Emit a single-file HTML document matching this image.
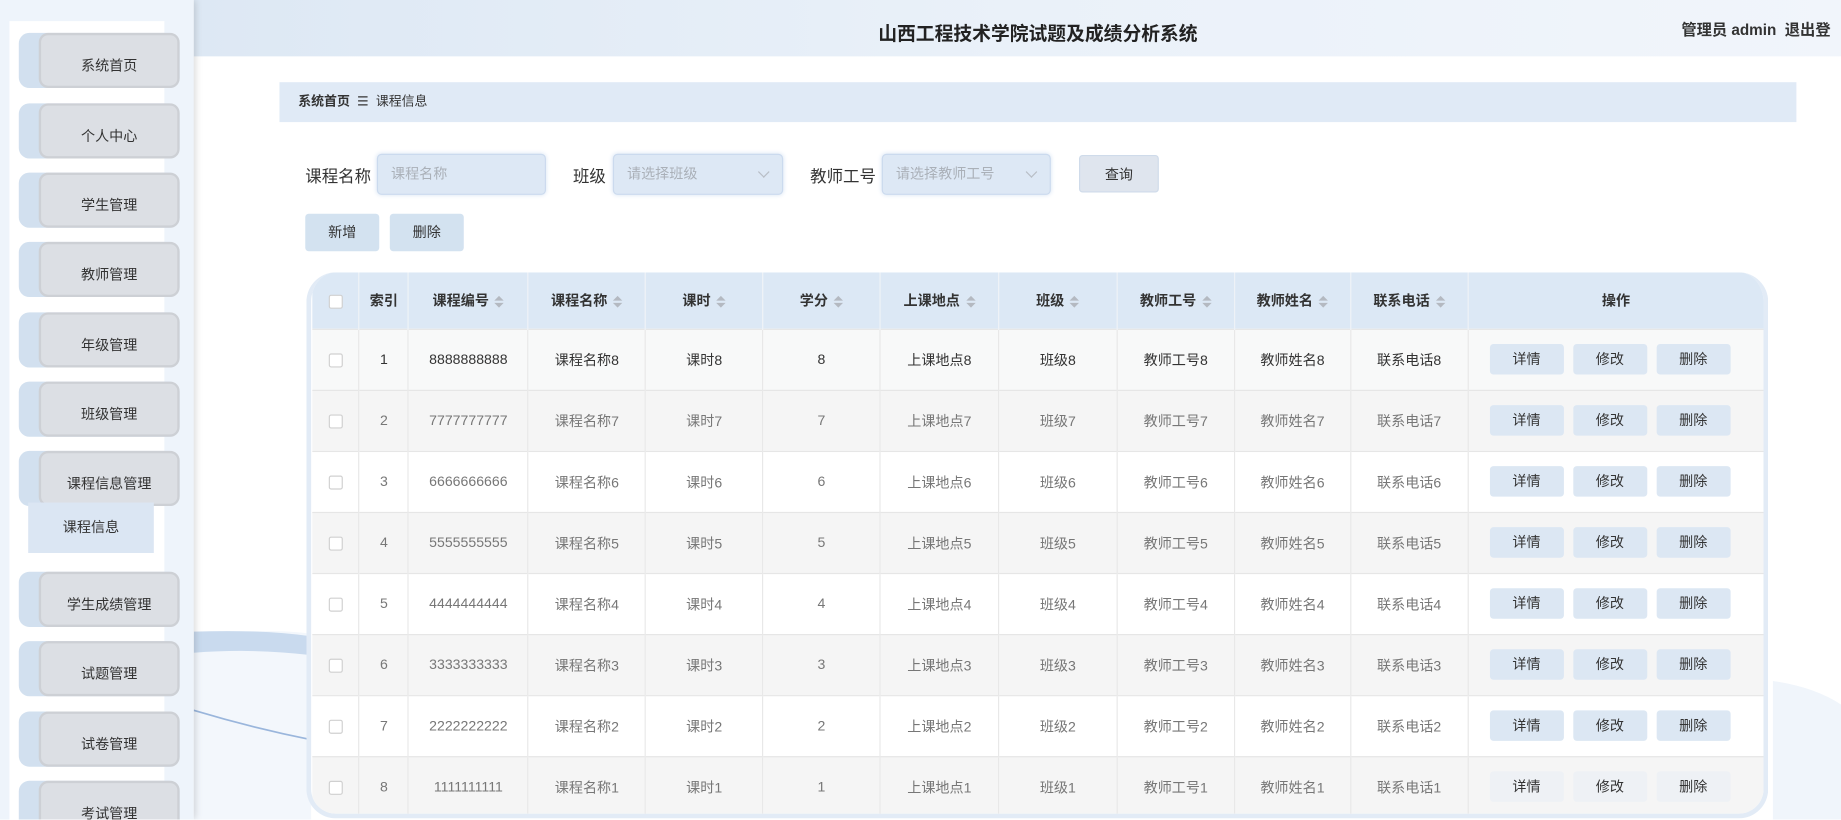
<!DOCTYPE html>
<html><head><meta charset="utf-8"><style>
*{margin:0;padding:0;box-sizing:border-box}
html,body{width:1841px;height:819px;overflow:hidden;background:#fff}
#w{position:absolute;left:0;top:0;width:1568px;height:698px;transform:scale(1.17411);transform-origin:0 0;font-family:"Liberation Sans","Noto Sans CJK SC",sans-serif;color:#333;background:#fff;overflow:hidden}
.abs{position:absolute}
#hdr{left:165px;top:0;width:1403px;height:48px;background:linear-gradient(90deg,#dde8f4,#eaf1f9 50%,#f1f5fb)}
#title{left:748px;top:15px;font-size:16px;font-weight:bold;color:#222;white-space:nowrap}
#user{left:1432px;top:15px;font-size:13px;font-weight:bold;color:#333;white-space:nowrap}
#side{left:0;top:0;width:165px;height:698px;background:#eef4fb;box-shadow:2px 0 6px rgba(0,0,0,.15)}
#sidein{left:8px;top:18px;width:132px;height:680px;background:#fff}
.mi{position:absolute;left:16px;width:137px;height:47px;background:#d2e0ef;border-radius:9px}
.mi div{position:absolute;left:17px;top:0;right:0;bottom:0;background:#dcdfe4;border:2px solid #cdd0d5;border-radius:8px;font-size:12px;text-align:center;padding-top:17px;color:#333}
#sub{left:24px;top:428px;width:107px;height:43px;background:#dbe6f3;font-size:12px;text-align:center;line-height:43px}
#bc{left:238px;top:70px;width:1292px;height:34px;background:#e0eaf6;font-size:11px;line-height:34px;padding-left:16px}
.lbl{font-size:14px;top:140px}
.inp{top:131px;height:35px;background:#dde8f5;border:1px solid #cbdaee;border-radius:4px;box-shadow:0 0 4px #d6e3f3;font-size:12px;color:#aab0b8;line-height:33px;padding-left:11px}
.chev{position:absolute;right:12px;top:11px;width:7px;height:7px;border-right:1px solid #b8bec6;border-bottom:1px solid #b8bec6;transform:rotate(45deg)}
.btn{height:32px;background:#d3e2f0;border-radius:3px;font-size:12px;text-align:center;line-height:32px}
#tbl{left:261px;top:232px;width:1245px;height:465px;border:4px solid #e2ebf6;border-top:0;border-radius:25px;overflow:hidden;background:#fff}
table{border-collapse:collapse;font-size:12px;position:absolute;left:1px;top:0}
th{height:48px;background:#dce8f5;font-weight:bold;color:#333;border-right:1px solid #eef2f7}
td{height:52px;text-align:center;color:#777;border-right:1px solid #e8e8e8;border-top:1px solid #e6e6e6}
tr.g td{background:#f5f5f5}
tr.f td{background:#f8f9f9;color:#333}
.cb{display:inline-block;width:12px;height:12px;border:1px solid #d0d0d0;background:#fff;border-radius:2px;vertical-align:middle}
.srt{display:inline-block;width:8px;height:11px;vertical-align:middle;margin-left:5px;position:relative}
.srt:before{content:"";position:absolute;left:0;top:0;border:4px solid transparent;border-bottom:4px solid #b4b9c1;border-top:0}
.srt:after{content:"";position:absolute;left:0;top:6px;border:4px solid transparent;border-top:4px solid #b4b9c1;border-bottom:0}
.ab{display:inline-block;width:63px;height:26px;line-height:26px;background:#dce7f3;border-radius:3px;color:#333;margin:0 4px;text-align:center}
td.op{text-align:left;padding-left:14px;border-right:0}
</style></head><body><div id="w">
<svg class="abs" style="left:165px;top:480px" width="1403" height="218"><path d="M0 60 Q150 50 100 80 L100 218 L0 218Z" fill="#f3f7fc"/><path d="M0 58 Q60 56 100 62 L100 78 Q50 72 0 76Z" fill="#c9daee"/><path d="M0 125 Q50 140 100 150" stroke="#9ab6dc" stroke-width="1.5" fill="none"/><path d="M1345 100 Q1380 105 1403 120 L1403 218 L1345 218Z" fill="#f0f5fb"/></svg>
<div id="hdr" class="abs"></div>
<div id="title" class="abs">山西工程技术学院试题及成绩分析系统</div>
<div id="user" class="abs">管理员 admin &nbsp;退出登</div>
<div id="side" class="abs"></div>
<div id="sidein" class="abs"></div>
<div class="mi" style="top:28px"><div>系统首页</div></div>
<div class="mi" style="top:88px"><div>个人中心</div></div>
<div class="mi" style="top:147px"><div>学生管理</div></div>
<div class="mi" style="top:206px"><div>教师管理</div></div>
<div class="mi" style="top:266px"><div>年级管理</div></div>
<div class="mi" style="top:325px"><div>班级管理</div></div>
<div class="mi" style="top:384px"><div>课程信息管理</div></div>
<div id="sub" class="abs">课程信息</div>
<div class="mi" style="top:487px"><div>学生成绩管理</div></div>
<div class="mi" style="top:546px"><div>试题管理</div></div>
<div class="mi" style="top:606px"><div>试卷管理</div></div>
<div class="mi" style="top:665px"><div>考试管理</div></div>
<div id="bc" class="abs"><b>系统首页</b> &nbsp;☰ &nbsp;课程信息</div>
<div class="abs lbl" style="left:260px">课程名称</div>
<div class="abs inp" style="left:321px;width:144px">课程名称</div>
<div class="abs lbl" style="left:488px">班级</div>
<div class="abs inp" style="left:522px;width:145px">请选择班级<span class="chev"></span></div>
<div class="abs lbl" style="left:690px">教师工号</div>
<div class="abs inp" style="left:751px;width:144px">请选择教师工号<span class="chev"></span></div>
<div class="abs btn" style="left:919px;top:132px;width:68px;background:#dfe5ee;border:1px solid #cfdbea">查询</div>
<div class="abs btn" style="left:260px;top:182px;width:63px">新增</div>
<div class="abs btn" style="left:332px;top:182px;width:63px">删除</div>
<div id="tbl" class="abs"><table>
<tr><th style="width:40px"><span class="cb"></span></th><th style="width:42px">索引</th><th style="width:102px">课程编号<span class="srt"></span></th><th style="width:100px">课程名称<span class="srt"></span></th><th style="width:100px">课时<span class="srt"></span></th><th style="width:100px">学分<span class="srt"></span></th><th style="width:101px">上课地点<span class="srt"></span></th><th style="width:101px">班级<span class="srt"></span></th><th style="width:100px">教师工号<span class="srt"></span></th><th style="width:99px">教师姓名<span class="srt"></span></th><th style="width:100px">联系电话<span class="srt"></span></th><th style="width:252px;border-right:0">操作</th></tr>
<tr class="f"><td><span class="cb"></span></td><td>1</td><td>8888888888</td><td>课程名称8</td><td>课时8</td><td>8</td><td>上课地点8</td><td>班级8</td><td>教师工号8</td><td>教师姓名8</td><td>联系电话8</td><td class="op"><span class="ab">详情</span><span class="ab">修改</span><span class="ab">删除</span></td></tr>
<tr class="g"><td><span class="cb"></span></td><td>2</td><td>7777777777</td><td>课程名称7</td><td>课时7</td><td>7</td><td>上课地点7</td><td>班级7</td><td>教师工号7</td><td>教师姓名7</td><td>联系电话7</td><td class="op"><span class="ab">详情</span><span class="ab">修改</span><span class="ab">删除</span></td></tr>
<tr><td><span class="cb"></span></td><td>3</td><td>6666666666</td><td>课程名称6</td><td>课时6</td><td>6</td><td>上课地点6</td><td>班级6</td><td>教师工号6</td><td>教师姓名6</td><td>联系电话6</td><td class="op"><span class="ab">详情</span><span class="ab">修改</span><span class="ab">删除</span></td></tr>
<tr class="g"><td><span class="cb"></span></td><td>4</td><td>5555555555</td><td>课程名称5</td><td>课时5</td><td>5</td><td>上课地点5</td><td>班级5</td><td>教师工号5</td><td>教师姓名5</td><td>联系电话5</td><td class="op"><span class="ab">详情</span><span class="ab">修改</span><span class="ab">删除</span></td></tr>
<tr><td><span class="cb"></span></td><td>5</td><td>4444444444</td><td>课程名称4</td><td>课时4</td><td>4</td><td>上课地点4</td><td>班级4</td><td>教师工号4</td><td>教师姓名4</td><td>联系电话4</td><td class="op"><span class="ab">详情</span><span class="ab">修改</span><span class="ab">删除</span></td></tr>
<tr class="g"><td><span class="cb"></span></td><td>6</td><td>3333333333</td><td>课程名称3</td><td>课时3</td><td>3</td><td>上课地点3</td><td>班级3</td><td>教师工号3</td><td>教师姓名3</td><td>联系电话3</td><td class="op"><span class="ab">详情</span><span class="ab">修改</span><span class="ab">删除</span></td></tr>
<tr><td><span class="cb"></span></td><td>7</td><td>2222222222</td><td>课程名称2</td><td>课时2</td><td>2</td><td>上课地点2</td><td>班级2</td><td>教师工号2</td><td>教师姓名2</td><td>联系电话2</td><td class="op"><span class="ab">详情</span><span class="ab">修改</span><span class="ab">删除</span></td></tr>
<tr class="g"><td><span class="cb"></span></td><td>8</td><td>1111111111</td><td>课程名称1</td><td>课时1</td><td>1</td><td>上课地点1</td><td>班级1</td><td>教师工号1</td><td>教师姓名1</td><td>联系电话1</td><td class="op"><span class="ab" style="background:#eef1f5">详情</span><span class="ab" style="background:#eef1f5">修改</span><span class="ab" style="background:#eef1f5">删除</span></td></tr>
</table></div>
</div></body></html>
